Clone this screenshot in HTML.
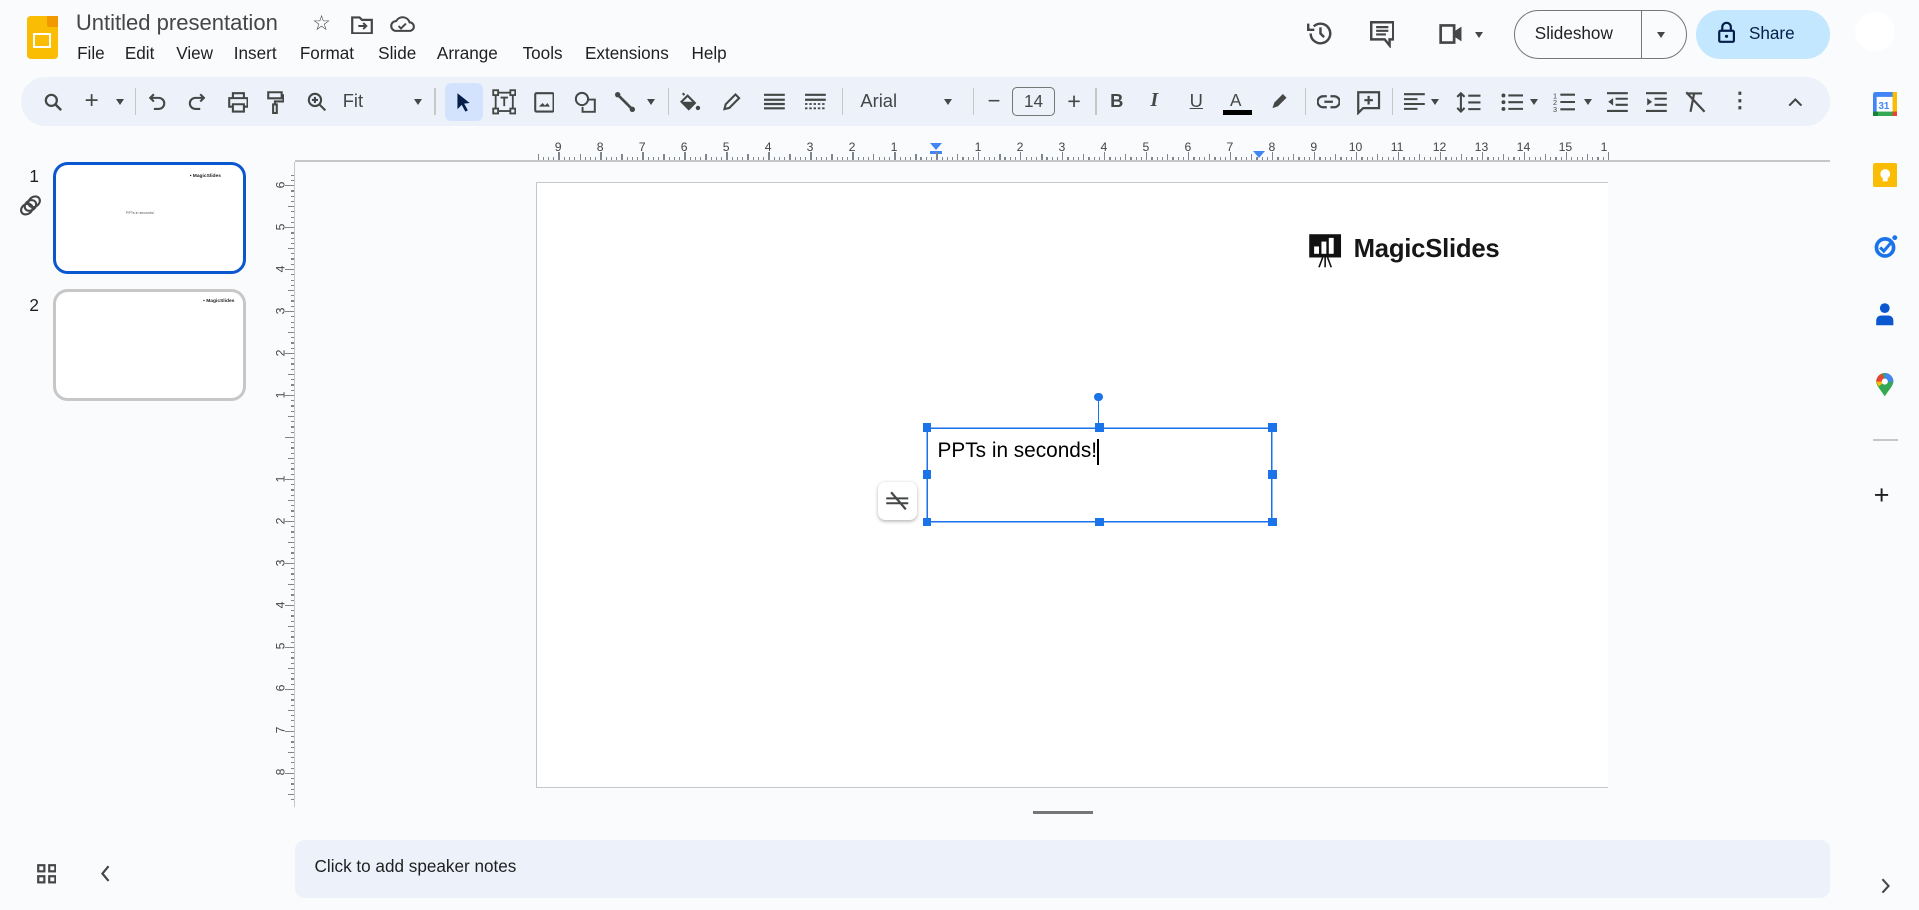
<!DOCTYPE html>
<html><head><meta charset="utf-8">
<style>
*{box-sizing:border-box;margin:0;padding:0}
html,body{width:1919px;height:910px;overflow:hidden;background:#f9fbfd}
#root{zoom:1.2239;width:1568px;height:744px;position:relative;font-family:"Liberation Sans",Arial,sans-serif;color:#1f1f1f}
.a{position:absolute}
.tb{position:absolute;top:63px;left:17px;width:1478px;height:40px;background:#edf2fa;border-radius:20px}
.i{position:absolute;top:73px;font-size:17px;color:#444746;line-height:20px;text-align:center}
.sep{position:absolute;top:72px;width:1px;height:22px;background:#c7c7c7}
.caret{position:absolute;top:81px;width:0;height:0;border-left:4px solid transparent;border-right:4px solid transparent;border-top:5px solid #444746}
.rn{position:absolute;font-size:10px;color:#444;font-family:"Liberation Sans",sans-serif}
.h{position:absolute;width:7px;height:7px;background:#1a73e8}
</style></head><body><div id="root">
<div class="a" style="left:22px;top:13px;width:25px;height:35px;background:#fbbc04;border-radius:3px"></div>
<div class="a" style="left:38px;top:13px;width:9px;height:9px;background:#f29900;border-bottom-left-radius:2px"></div>
<div class="a" style="left:27px;top:27px;width:15px;height:12px;border:2px solid #fff"></div>
<div class="a" style="left:62px;top:8px;font-size:18px;color:#444746">Untitled presentation</div>
<div class="a" style="left:255px;top:9px;font-size:17px;color:#444746">☆</div>
<svg class="a" style="left:287px;top:12px" width="18" height="16" viewBox="0 0 18 16"><path d="M1 2h6l2 2h8v11H1z" fill="none" stroke="#444746" stroke-width="1.8"/><path d="M6 9h6M10 6.5l2.5 2.5-2.5 2.5" fill="none" stroke="#444746" stroke-width="1.6"/></svg>
<svg class="a" style="left:319px;top:12px" width="20" height="15" viewBox="0 0 20 15"><path d="M5 13a4 4 0 0 1 0-8 6 6 0 0 1 11 1 3.5 3.5 0 0 1 0 7z" fill="none" stroke="#444746" stroke-width="1.7"/><path d="M7 9l2 2 4-4" fill="none" stroke="#444746" stroke-width="1.6"/></svg>
<div class="a" style="left:63px;top:35px;font-size:14px;color:#1f1f1f">
<span class="a" style="left:0">File</span><span class="a" style="left:39px">Edit</span><span class="a" style="left:81px">View</span><span class="a" style="left:128px">Insert</span><span class="a" style="left:182px">Format</span><span class="a" style="left:246px">Slide</span><span class="a" style="left:294px">Arrange</span><span class="a" style="left:364px">Tools</span><span class="a" style="left:415px">Extensions</span><span class="a" style="left:502px">Help</span></div>
<svg class="a" style="left:1068px;top:16px" width="22" height="22" viewBox="0 0 22 22"><path d="M3 11a8 8 0 1 0 2.5-5.8" fill="none" stroke="#444746" stroke-width="2"/><path d="M1 3v5h5" fill="none" stroke="#444746" stroke-width="2"/><path d="M11 6v5l3 3" fill="none" stroke="#444746" stroke-width="2"/></svg>
<svg class="a" style="left:1119px;top:17px" width="20" height="22" viewBox="0 0 20 22"><path d="M1 1h18v14h-3v5l-4-5H1z" fill="none" stroke="#444746" stroke-width="2"/><path d="M5 5h10M5 8h10M5 11h8" stroke="#444746" stroke-width="1.8"/></svg>
<svg class="a" style="left:1174px;top:19px" width="24" height="18" viewBox="0 0 24 18"><path d="M3 2h11v14H3z" fill="none" stroke="#444746" stroke-width="2.2"/><path d="M14 7l6-4v12l-6-4" fill="#444746"/></svg>
<div class="caret" style="left:1205px;top:26px"></div>
<div class="a" style="left:1237px;top:8px;width:141px;height:40px;border:1px solid #747775;border-radius:20px"></div>
<div class="a" style="left:1341px;top:8px;width:1px;height:40px;background:#747775"></div>
<div class="a" style="left:1254px;top:19px;font-size:14px;color:#1f1f1f">Slideshow</div>
<div class="caret" style="left:1354px;top:26px"></div>
<div class="a" style="left:1386px;top:8px;width:109px;height:40px;background:#c2e7ff;border-radius:20px"></div>
<svg class="a" style="left:1404px;top:17px" width="14" height="18" viewBox="0 0 14 18"><path d="M3.5 8V5a3.5 3.5 0 0 1 7 0v3" fill="none" stroke="#041e49" stroke-width="1.8"/><rect x="1" y="8" width="12" height="9" rx="1" fill="none" stroke="#041e49" stroke-width="1.8"/><circle cx="7" cy="12.5" r="1.3" fill="#041e49"/></svg>
<div class="a" style="left:1429px;top:19px;font-size:14px;color:#041e49">Share</div>
<div class="a" style="left:1516px;top:10px;width:32px;height:32px;background:#fff;border-radius:50%"></div>
<div class="tb"></div>
<svg class="a" style="left:36px;top:76px" width="16" height="16" viewBox="0 0 16 16"><circle cx="6" cy="6" r="4.5" fill="none" stroke="#444746" stroke-width="1.8"/><path d="M9.5 9.5L14 14" stroke="#444746" stroke-width="2"/></svg>
<div class="i" style="left:69px;font-size:20px">+</div><div class="caret" style="left:95px"></div>
<div class="sep" style="left:110px"></div>
<svg class="a" style="left:122px;top:76px" width="14" height="14" viewBox="0 0 14 14"><path d="M4 1L1 4l3 3M1 4h7a4.5 4.5 0 0 1 0 9H4" fill="none" stroke="#444746" stroke-width="1.7"/></svg>
<svg class="a" style="left:154px;top:76px" width="14" height="14" viewBox="0 0 14 14"><path d="M10 1l3 3-3 3M13 4H6a4.5 4.5 0 0 0 0 9h4" fill="none" stroke="#444746" stroke-width="1.7"/></svg>
<svg class="a" style="left:186px;top:75px" width="17" height="17" viewBox="0 0 17 17"><path d="M4 5V1h9v4M4 12H1V5h15v7h-3M4 10h9v6H4z" fill="none" stroke="#444746" stroke-width="1.7"/></svg>
<svg class="a" style="left:218px;top:74px" width="14" height="19" viewBox="0 0 14 19"><path d="M1 1h11v5H1zM12 3.5h1.5v5H6.5v3M5 11h3v7H5z" fill="none" stroke="#444746" stroke-width="1.7"/></svg>
<svg class="a" style="left:251px;top:75px" width="17" height="17" viewBox="0 0 17 17"><circle cx="6.5" cy="6.5" r="5" fill="none" stroke="#444746" stroke-width="1.7"/><path d="M10 10l5 5M4 6.5h5M6.5 4v5" stroke="#444746" stroke-width="1.7"/></svg>
<div class="i" style="left:280px;font-size:15px;color:#444746">Fit</div><div class="caret" style="left:338px"></div>
<div class="sep" style="left:355px"></div>
<div class="a" style="left:364px;top:68px;width:31px;height:31px;background:#d3e3fd;border-radius:5px"></div>
<svg class="a" style="left:372px;top:75px" width="14" height="18" viewBox="0 0 14 18"><path d="M2 1l10 8-4.5.5 3 5.5-2 1-3-5.5L2 14z" fill="#041e49"/></svg>
<svg class="a" style="left:402px;top:73px" width="20" height="21" viewBox="0 0 20 21"><rect x="3" y="3" width="14" height="15" fill="none" stroke="#444746" stroke-width="1.5"/><rect x="1" y="1" width="4" height="4" fill="#edf2fa" stroke="#444746" stroke-width="1.5"/><rect x="15" y="1" width="4" height="4" fill="#edf2fa" stroke="#444746" stroke-width="1.5"/><rect x="1" y="16" width="4" height="4" fill="#edf2fa" stroke="#444746" stroke-width="1.5"/><rect x="15" y="16" width="4" height="4" fill="#edf2fa" stroke="#444746" stroke-width="1.5"/><path d="M7 7h6M10 7v7" stroke="#444746" stroke-width="1.5"/></svg>
<svg class="a" style="left:436px;top:75px" width="17" height="17" viewBox="0 0 17 17"><rect x="1" y="1" width="15" height="15" rx="1" fill="none" stroke="#444746" stroke-width="1.7"/><path d="M4 12l3-3 2 2 2-2 2 3z" fill="#444746"/></svg>
<svg class="a" style="left:469px;top:74px" width="19" height="19" viewBox="0 0 19 19"><circle cx="6.5" cy="6.5" r="5" fill="none" stroke="#444746" stroke-width="1.6"/><path d="M12 7h5v10H7v-4" fill="none" stroke="#444746" stroke-width="1.6"/></svg>
<svg class="a" style="left:502px;top:74px" width="18" height="18" viewBox="0 0 18 18"><path d="M3 3l12 12" stroke="#444746" stroke-width="2.2"/><circle cx="3" cy="3" r="2.2" fill="#444746"/><circle cx="15" cy="15" r="2.2" fill="#444746"/></svg>
<div class="caret" style="left:529px"></div>
<div class="sep" style="left:546px"></div>
<svg class="a" style="left:555px;top:75px" width="18" height="17" viewBox="0 0 18 17"><path d="M3 1l1.5 1.5M7 3l6 6-5 5-6-6z" fill="none" stroke="#444746" stroke-width="1.7"/><path d="M2 8h11l-5 5z" fill="#444746"/><circle cx="15.5" cy="13" r="1.8" fill="#444746"/></svg>
<svg class="a" style="left:590px;top:75px" width="16" height="16" viewBox="0 0 16 16"><path d="M2 14l1-4 8-8 3 3-8 8z" fill="none" stroke="#444746" stroke-width="1.7"/></svg>
<svg class="a" style="left:624px;top:76px" width="17" height="14" viewBox="0 0 17 14"><path d="M0 1.5h17M0 5.5h17M0 9h17M0 12.5h17" stroke="#444746" stroke-width="1.8"/></svg>
<svg class="a" style="left:658px;top:76px" width="17" height="14" viewBox="0 0 17 14"><path d="M0 1.5h17M0 5.5h17" stroke="#444746" stroke-width="1.8"/><path d="M0 9h17M0 12.5h17" stroke="#444746" stroke-width="1.5" stroke-dasharray="2 1.5"/></svg>
<div class="sep" style="left:688px"></div>
<div class="i" style="left:703px;font-size:15px;color:#444746">Arial</div><div class="caret" style="left:771px"></div>
<div class="sep" style="left:795px"></div>
<div class="i" style="left:807px;font-size:18px">−</div>
<div class="a" style="left:827px;top:71px;width:35px;height:24px;border:1px solid #747775;border-radius:4px;font-size:14px;text-align:center;line-height:22px;color:#444746">14</div>
<div class="i" style="left:872px;font-size:19px">+</div>
<div class="sep" style="left:895px"></div>
<div class="i" style="left:907px;font-weight:bold;font-size:15px">B</div>
<div class="i" style="left:940px;font-style:italic;font-size:16px;font-family:'Liberation Serif',serif;font-weight:bold">I</div>
<div class="i" style="left:972px;font-size:15px;text-decoration:underline">U</div>
<div class="i" style="left:1005px;font-size:14px;top:72px">A</div>
<div class="a" style="left:999px;top:90px;width:24px;height:4px;background:#000"></div>
<svg class="a" style="left:1038px;top:74px" width="16" height="16" viewBox="0 0 16 16"><path d="M2 14l1.5-4.5 7-7 3 3-7 7z" fill="#444746"/></svg>
<div class="sep" style="left:1066px"></div>
<svg class="a" style="left:1076px;top:78px" width="19" height="11" viewBox="0 0 19 11"><path d="M8 1H5a4.5 4.5 0 0 0 0 9h3M11 1h3a4.5 4.5 0 0 1 0 9h-3M6 5.5h7" fill="none" stroke="#444746" stroke-width="1.8"/></svg>
<svg class="a" style="left:1109px;top:74px" width="19" height="20" viewBox="0 0 19 20"><path d="M1 1h17v13H5l-4 4z" fill="none" stroke="#444746" stroke-width="1.8"/><path d="M9.5 4v7M6 7.5h7" stroke="#444746" stroke-width="1.8"/></svg>
<div class="sep" style="left:1137px"></div>
<svg class="a" style="left:1147px;top:76px" width="17" height="15" viewBox="0 0 17 15"><path d="M0 1h17M0 5h11M0 9h17M0 13h11" stroke="#444746" stroke-width="1.7"/></svg><div class="caret" style="left:1169px"></div>
<svg class="a" style="left:1190px;top:75px" width="20" height="17" viewBox="0 0 20 17"><path d="M4 1v15M1 4l3-3 3 3M1 13l3 3 3-3M10 3h10M10 8.5h10M10 14h10" fill="none" stroke="#444746" stroke-width="1.7"/></svg>
<svg class="a" style="left:1226px;top:76px" width="18" height="15" viewBox="0 0 18 15"><circle cx="2" cy="2" r="1.6" fill="#444746"/><circle cx="2" cy="7.5" r="1.6" fill="#444746"/><circle cx="2" cy="13" r="1.6" fill="#444746"/><path d="M6 2h12M6 7.5h12M6 13h12" stroke="#444746" stroke-width="1.7"/></svg><div class="caret" style="left:1250px"></div>
<svg class="a" style="left:1269px;top:74px" width="18" height="18" viewBox="0 0 18 18"><text x="0" y="6" font-size="6" fill="#444746" font-family="Liberation Sans">1</text><text x="0" y="11.5" font-size="6" fill="#444746" font-family="Liberation Sans">2</text><text x="0" y="17" font-size="6" fill="#444746" font-family="Liberation Sans">3</text><path d="M6 3h12M6 9h12M6 15h12" stroke="#444746" stroke-width="1.7"/></svg><div class="caret" style="left:1294px"></div>
<svg class="a" style="left:1313px;top:75px" width="17" height="17" viewBox="0 0 17 17"><path d="M0 1h17M7 5.5h10M7 10.5h10M0 15.5h17" stroke="#444746" stroke-width="1.7"/><path d="M5 5l-4 3 4 3z" fill="#444746"/></svg>
<svg class="a" style="left:1345px;top:75px" width="17" height="17" viewBox="0 0 17 17"><path d="M0 1h17M7 5.5h10M7 10.5h10M0 15.5h17" stroke="#444746" stroke-width="1.7"/><path d="M1 5l4 3-4 3z" fill="#444746"/></svg>
<svg class="a" style="left:1377px;top:74px" width="17" height="18" viewBox="0 0 17 18"><path d="M1 2h13M7.5 2l-3 15M1 1l15 16" stroke="#444746" stroke-width="1.8"/></svg>
<div class="i" style="left:1413px;font-weight:bold">⋮</div>
<svg class="a" style="left:1461px;top:79px" width="12" height="8" viewBox="0 0 12 8"><path d="M1 7l5-5 5 5" fill="none" stroke="#444746" stroke-width="1.7"/></svg>
<div class="a" style="left:24px;top:136px;font-size:14px">1</div>
<svg class="a" style="left:14px;top:157px" width="22" height="22" viewBox="0 0 22 22"><g fill="none" stroke="#444746" stroke-width="1.7"><ellipse cx="8" cy="14" rx="5" ry="4" transform="rotate(-35 8 14)"/><ellipse cx="11" cy="11" rx="5" ry="4" transform="rotate(-35 11 11)"/><ellipse cx="14" cy="8" rx="5" ry="4" transform="rotate(-35 14 8)"/></g></svg>
<div class="a" style="left:43px;top:132px;width:158px;height:92px;border:3px solid #0b57d0;border-radius:12px;background:#fff"></div>
<div class="a" style="left:155px;top:142px;font-size:4px;font-weight:bold">▪ MagicSlides</div>
<div class="a" style="left:103px;top:172px;font-size:3px;color:#555">PPTs in seconds!</div>
<div class="a" style="left:24px;top:241px;font-size:14px">2</div>
<div class="a" style="left:43px;top:236px;width:158px;height:92px;border:3px solid #c7c7c7;border-radius:12px;background:#fff"></div>
<div class="a" style="left:166px;top:244px;font-size:4px;font-weight:bold">▪ MagicSlides</div>
<div class="a" style="left:241px;top:131px;width:1254px;height:1px;background:#c4c7c5"></div>
<div class="a" style="left:240px;top:132px;width:1px;height:527px;background:#c4c7c5"></div>
<div class="a" style="left:760px;top:117px;width:0;height:0;border-left:5px solid transparent;border-right:5px solid transparent;border-top:6px solid #4285f4"></div>
<div class="a" style="left:760px;top:123px;width:10px;height:3px;background:#4285f4"></div>
<div class="a" style="left:1024px;top:123px;width:0;height:0;border-left:5px solid transparent;border-right:5px solid transparent;border-top:6px solid #4285f4"></div>
<div class="a" style="left:438px;top:149px;width:876px;height:495px;background:#fff;border:1px solid #c4c7c5;border-right:none"></div>
<svg class="a" style="left:1069px;top:190px" width="30" height="29" viewBox="0 0 30 29"><rect x="1" y="1" width="26" height="19" fill="#111"/><rect x="5" y="11" width="4" height="6" fill="#fff"/><rect x="11" y="7" width="4" height="10" fill="#fff"/><rect x="17" y="4" width="4" height="13" fill="#fff"/><path d="M12 20l-3 8M14 20v8M16 20l3 8" stroke="#111" stroke-width="1.3"/></svg>
<div class="a" style="left:1106px;top:192px;font-size:21px;font-weight:bold;color:#161616;letter-spacing:-0.2px">MagicSlides</div>
<div class="a" style="left:757px;top:349px;width:283px;height:78px;border:2px solid #8ab4f8;outline:1px solid #1a73e8;outline-offset:-2px"></div>
<div class="a" style="left:897px;top:326px;width:1px;height:23px;background:#1a73e8"></div>
<div class="a" style="left:894px;top:321px;width:7px;height:7px;border-radius:50%;background:#1a73e8"></div>
<div class="h" style="left:754px;top:346px"></div><div class="h" style="left:895px;top:346px"></div><div class="h" style="left:1036px;top:346px"></div>
<div class="h" style="left:754px;top:384px"></div><div class="h" style="left:1036px;top:384px"></div>
<div class="h" style="left:754px;top:423px"></div><div class="h" style="left:895px;top:423px"></div><div class="h" style="left:1036px;top:423px"></div>
<div class="a" style="left:766px;top:359px;font-size:17px;color:#000">PPTs in seconds!</div>
<div class="a" style="left:896px;top:359px;width:2px;height:21px;background:#000"></div>
<div class="a" style="left:717px;top:394px;width:32px;height:31px;background:#fff;border-radius:6px;box-shadow:0 1px 3px rgba(0,0,0,.3)"></div>
<svg class="a" style="left:723px;top:401px" width="20" height="16" viewBox="0 0 20 16"><path d="M1 6h18M1 10h18" stroke="#444746" stroke-width="1.6"/><path d="M5 1l12 14" stroke="#444746" stroke-width="1.8"/></svg>
<div class="a" style="left:844px;top:663px;width:49px;height:2px;background:#747775"></div>
<div class="a" style="left:241px;top:686px;width:1254px;height:48px;background:#edf2fa;border-radius:8px"></div>
<div class="a" style="left:257px;top:699px;font-size:14px;color:#1f1f1f">Click to add speaker notes</div>
<svg class="a" style="left:30px;top:706px" width="16" height="16" viewBox="0 0 16 16"><g fill="none" stroke="#444746" stroke-width="1.8"><rect x="1" y="1" width="5" height="5"/><rect x="10" y="1" width="5" height="5"/><rect x="1" y="10" width="5" height="5"/><rect x="10" y="10" width="5" height="5"/></g></svg>
<svg class="a" style="left:82px;top:707px" width="9" height="14" viewBox="0 0 9 14"><path d="M7 1L2 7l5 6" fill="none" stroke="#444746" stroke-width="1.8"/></svg>
<svg class="a" style="left:1530px;top:75px" width="20" height="20" viewBox="0 0 20 20"><rect x="0" y="0" width="20" height="20" rx="2" fill="#4285f4"/><rect x="0" y="16" width="20" height="4" fill="#34a853"/><rect x="16" y="0" width="4" height="16" fill="#fbbc04"/><rect x="0" y="16" width="4" height="4" fill="#188038"/><rect x="16" y="16" width="4" height="4" fill="#ea4335"/><rect x="3" y="4" width="13" height="12" fill="#fff"/><text x="4.5" y="14" font-size="8" font-weight="bold" fill="#4285f4" font-family="Liberation Sans">31</text></svg>
<svg class="a" style="left:1530px;top:133px" width="20" height="20" viewBox="0 0 20 20"><rect width="20" height="20" rx="2" fill="#fbbc04"/><circle cx="10" cy="9" r="4" fill="#fff"/><rect x="8" y="12" width="4" height="3" fill="#fff"/></svg>
<svg class="a" style="left:1531px;top:191px" width="20" height="20" viewBox="0 0 20 20"><circle cx="9" cy="11" r="7" fill="none" stroke="#1a73e8" stroke-width="3"/><path d="M5 11l3 3 6-7" fill="none" stroke="#1a73e8" stroke-width="2.5"/><circle cx="17" cy="3" r="2" fill="#1a73e8"/></svg>
<svg class="a" style="left:1532px;top:247px" width="16" height="20" viewBox="0 0 16 20"><circle cx="8" cy="5" r="4" fill="#0b57d0"/><path d="M1 19v-4a4 4 0 0 1 4-4h6a4 4 0 0 1 4 4v4z" fill="#0b57d0"/></svg>
<svg class="a" style="left:1532px;top:305px" width="16" height="20" viewBox="0 0 16 20"><path d="M8 19C4 13 1 10 1 7a7 7 0 0 1 14 0c0 3-3 6-7 12z" fill="#34a853"/><path d="M1 7a7 7 0 0 1 5-6.5L8 7z" fill="#ea4335"/><path d="M8 0a7 7 0 0 1 7 7H8z" fill="#4285f4"/><path d="M1 7h7l-5 4z" fill="#fbbc04"/><circle cx="8" cy="7" r="2.5" fill="#fff"/></svg>
<div class="a" style="left:1530px;top:359px;width:21px;height:1px;background:#c7c7c7"></div>
<div class="a" style="left:1531px;top:392px;font-size:22px;color:#1f1f1f">+</div>
<svg class="a" style="left:1536px;top:717px" width="9" height="13" viewBox="0 0 9 13"><path d="M2 1l5 5.5L2 12" fill="none" stroke="#444746" stroke-width="1.7"/></svg>
</div>
<script>
var r=document.getElementById('root'),h='';
var z=765,s=34.3;
for(var u=-9.5;u<=16;u+=0.125){var x=z+u*s;if(x<438||x>1315)continue;var f=Math.abs(u%1);var L=(f<0.01||f>0.99)?7:(Math.abs(f-0.5)<0.01?5:2.5);
h+='<div class="a" style="left:'+x.toFixed(1)+'px;top:'+(131-L)+'px;width:1px;height:'+L+'px;background:#80868b"></div>';}
for(var n=-9;n<=16;n++){if(n==0)continue;var x=z+n*s;if(x>1318)continue;var lab=n==16?'1':Math.abs(n);h+='<div class="rn" style="left:'+(x-(Math.abs(n)>9?6:3))+'px;top:114px">'+lab+'</div>';}
var zy=357;
for(var u=-6.5;u<=8.7;u+=0.125){var y=zy+u*s;if(y<140||y>658)continue;var f=Math.abs(u%1);var L=(f<0.01||f>0.99)?7:(Math.abs(f-0.5)<0.01?5:2.5);
h+='<div class="a" style="top:'+y.toFixed(1)+'px;left:'+(240-L)+'px;height:1px;width:'+L+'px;background:#80868b"></div>';}
for(var n=-6;n<=8;n++){if(n==0)continue;var y=zy+n*s;h+='<div class="rn" style="left:226px;top:'+(y-6)+'px;transform:rotate(-90deg)">'+Math.abs(n)+'</div>';}
r.insertAdjacentHTML('beforeend',h);
</script>
</body></html>
